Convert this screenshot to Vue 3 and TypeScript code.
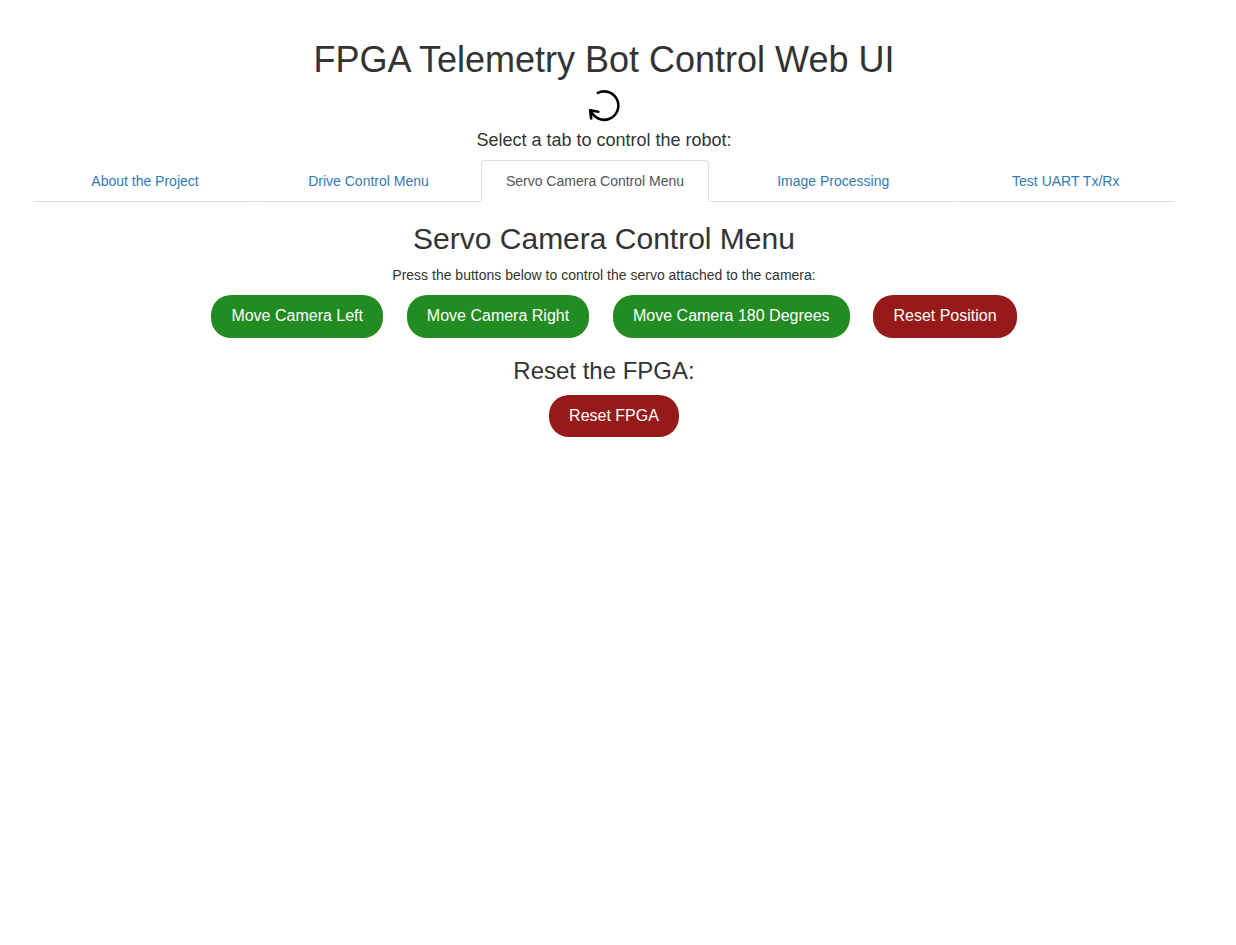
<script setup lang="ts">
import { ref } from 'vue'

const tabs: string[] = [
  'About the Project',
  'Drive Control Menu',
  'Servo Camera Control Menu',
  'Image Processing',
  'Test UART Tx/Rx',
]
const active = ref(2)
const moves: string[] = ['Move Camera Left', 'Move Camera Right', 'Move Camera 180 Degrees']
</script>

<template>
  <main class="page">
    <h1>FPGA Telemetry Bot Control Web UI</h1>
    <svg class="reload" viewBox="0 0 32 32" fill="none" stroke="#000" stroke-width="2.6" stroke-linecap="round" stroke-linejoin="round">
      <path d="M9.8 2.9A14.2 14.2 0 1 1 2.8 20.4" />
      <path d="M3.2 28.4 2.1 20.3l8.2 1.5" />
    </svg>
    <h4>Select a tab to control the robot:</h4>
    <ul class="tabs">
      <li v-for="(tab, i) in tabs" :key="tab">
        <a :class="{ active: i === active }" @click="active = i">{{ tab }}</a>
      </li>
    </ul>
    <h2>Servo Camera Control Menu</h2>
    <p>Press the buttons below to control the servo attached to the camera:</p>
    <div class="buttons">
      <button v-for="move in moves" :key="move" class="green">{{ move }}</button>
      <button class="red">Reset Position</button>
    </div>
    <h3>Reset the FPGA:</h3>
    <div class="buttons">
      <button class="red">Reset FPGA</button>
    </div>
  </main>
</template>

<style>
body {
  margin: 0;
  background: #fff;
}
</style>

<style scoped>
.page {
  box-sizing: border-box;
  width: 1208px;
  padding: 20px 34px;
  font-family: 'Liberation Sans', Arial, sans-serif;
  font-size: 14px;
  line-height: 20px;
  color: #333;
  text-align: center;
  display: flow-root;
}
h1, h2, h3, h4 {
  font-weight: 500;
  line-height: 1.1;
  margin: 20px 0 10px;
}
h1 { font-size: 36px; }
h2 { font-size: 30px; }
h3 { font-size: 24px; }
h4 {
  font-size: 18px;
  margin: 8.95px 0 10px;
}
p { margin: 0 0 10px; }
.reload {
  display: block;
  width: 32px;
  height: 32px;
  margin: 0 auto;
  overflow: visible;
}
.tabs {
  display: grid;
  grid-template-columns: 222px 225px 228px 248.5px 216.5px;
  margin: 0;
  padding: 0;
  list-style: none;
}
.tabs a {
  display: block;
  padding: 10px 15px;
  border: 1px solid transparent;
  border-bottom-color: #ddd;
  border-radius: 4px 4px 0 0;
  color: #337ab7;
  cursor: pointer;
}
.tabs a.active {
  color: #555;
  border-color: #ddd;
  border-bottom-color: #fff;
}
.buttons {
  display: flex;
  justify-content: center;
  gap: 3.89px;
}
button {
  margin: 0 0 0 20px;
  padding: 10px 20px;
  border: 0;
  border-radius: 20px;
  font: 16px/22.857px 'Liberation Sans', Arial, sans-serif;
  color: #fff;
  cursor: pointer;
}
.green { background: #228b22; }
.red { background: #961a1a; }
</style>
